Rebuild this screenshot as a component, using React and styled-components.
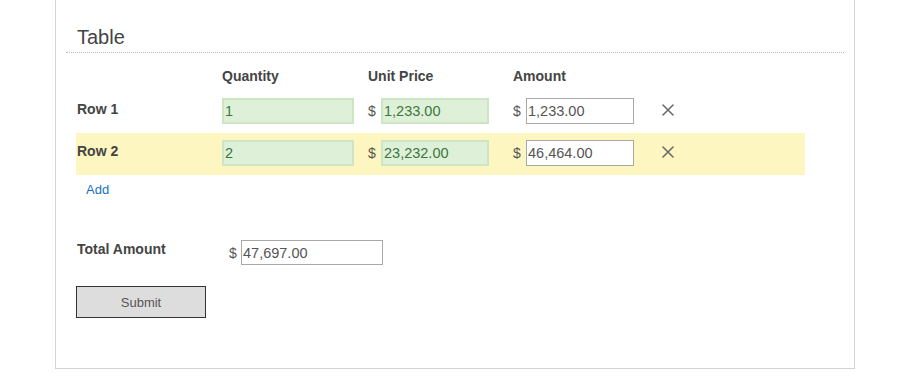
import React from "react";
import styled, { createGlobalStyle } from "styled-components";

const Global = createGlobalStyle`
  html, body { margin: 0; padding: 0; background: #fff; }
  body { font-family: "Liberation Sans", Arial, sans-serif; color: #444; }
  * { box-sizing: border-box; }
`;

const Panel = styled.div`
  margin-left: 55px;
  width: 800px;
  height: 369px;
  border: 1px solid #d3d3d3;
  border-top: none;
`;

const Header = styled.div`
  margin: 0 10px;
  padding: 25px 0 3px 11px;
  border-bottom: 1px dotted #bdbdbd;
`;

const Title = styled.h2`
  margin: 0;
  font-size: 20px;
  line-height: 24px;
  font-weight: normal;
  color: #444;
`;

const Table = styled.div`
  margin: 15px 0 0 20px;
  width: 729px;
`;

const Row = styled.div`
  display: grid;
  grid-template-columns: 145px 146px 145px 145px 1fr;
  padding-left: 1px;
  align-items: ${(p) => (p.$head ? "start" : "center")};
  height: ${(p) => (p.$head ? "23px" : "42px")};
  background: ${(p) => (p.$warn ? "#fdf6c1" : "transparent")};
`;

const Label = styled.div`
  font-size: 14px;
  line-height: 16px;
  font-weight: bold;
  color: #444;
`;

const RowLabel = styled(Label)`
  margin-bottom: 6px;
`;

const Cell = styled.div`
  display: flex;
  align-items: center;
  margin-top: -2px;
`;

const Dollar = styled.span`
  font-size: 14px;
  color: #555;
  margin-right: 5px;
  width: 8px;
`;

const Input = styled.input`
  font-family: "Liberation Sans", Arial, sans-serif;
  font-size: 14.5px;
  height: ${(p) => p.$h || 26}px;
  width: ${(p) => p.$w}px;
  padding: 0 0 0 1px;
  margin: 0;
  outline: none;
  border: ${(p) => (p.$ok ? "2px solid #cde5c3" : "1px solid #a9a9a9")};
  background: ${(p) => (p.$ok ? "#dff0d8" : "#fff")};
  color: ${(p) => (p.$ok ? "#3c763d" : "#555")};
`;

const Remove = styled.button`
  border: none;
  background: none;
  padding: 0;
  margin: 0 0 5px 4px;
  width: 12px;
  height: 12px;
  display: flex;
  cursor: pointer;
`;

const AddLink = styled.a`
  display: inline-block;
  margin: 7px 0 0 10px;
  font-size: 13px;
  line-height: 15px;
  color: #1570c4;
  text-decoration: none;
`;

const TotalRow = styled.div`
  display: grid;
  grid-template-columns: 152px auto;
  margin: 42px 0 0 21px;
  align-items: start;
`;

const TotalLabel = styled(Label)`
  padding-top: 1px;
`;

const TotalField = styled.div`
  display: flex;
  align-items: center;
  height: 25px;
`;

const TotalDollar = styled(Dollar)`
  margin-right: 4px;
`;

const SubmitButton = styled.button`
  display: block;
  margin: 21px 0 0 20px;
  width: 130px;
  height: 32px;
  border: 1px solid #333;
  background: #dddddd;
  color: #555;
  font-family: "Liberation Sans", Arial, sans-serif;
  font-size: 13px;
  padding: 0;
`;

const XIcon = () => (
  <svg width="12" height="12" viewBox="0 0 12 12">
    <path d="M1 1 L11 11 M11 1 L1 11" stroke="#6b6b6b" strokeWidth="1.6" strokeLinecap="round" fill="none" />
  </svg>
);

const rows = [
  { label: "Row 1", qty: "1", price: "1,233.00", amount: "1,233.00" },
  { label: "Row 2", qty: "2", price: "23,232.00", amount: "46,464.00", warn: true },
];

export default function App() {
  return (
    <>
      <Global />
      <Panel>
        <Header>
          <Title>Table</Title>
        </Header>
        <Table>
          <Row $head>
            <span />
            <Label>Quantity</Label>
            <Label>Unit Price</Label>
            <Label>Amount</Label>
            <span />
          </Row>
          {rows.map((r) => (
            <Row key={r.label} $warn={r.warn}>
              <RowLabel>{r.label}</RowLabel>
              <Cell>
                <Input $ok $w={132} defaultValue={r.qty} />
              </Cell>
              <Cell>
                <Dollar>$</Dollar>
                <Input $ok $w={108} defaultValue={r.price} />
              </Cell>
              <Cell>
                <Dollar>$</Dollar>
                <Input $w={108} defaultValue={r.amount} />
              </Cell>
              <Remove aria-label="Remove row">
                <XIcon />
              </Remove>
            </Row>
          ))}
          <AddLink href="#">Add</AddLink>
        </Table>
        <TotalRow>
          <TotalLabel>Total Amount</TotalLabel>
          <TotalField>
            <TotalDollar>$</TotalDollar>
            <Input $w={142} $h={25} defaultValue="47,697.00" />
          </TotalField>
        </TotalRow>
        <SubmitButton>Submit</SubmitButton>
      </Panel>
    </>
  );
}
